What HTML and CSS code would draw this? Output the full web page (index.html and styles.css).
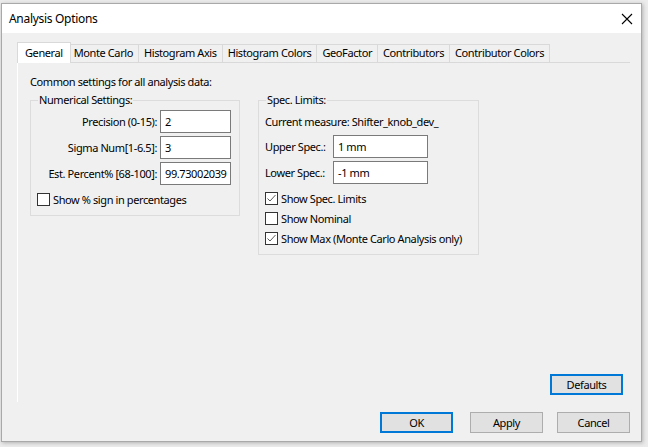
FILE: index.html
```html
<!DOCTYPE html>
<html>
<head>
<meta charset="utf-8">
<link rel="stylesheet" href="styles.css">
</head>
<body>
<div class="window">
  <div class="titlebar">
    <span class="title">Analysis Options</span>
    <svg class="close" width="12" height="12" viewBox="0 0 12 12"><path d="M1 1 L11 11 M11 1 L1 11" stroke="#000" stroke-width="1.1" fill="none"/></svg>
  </div>
  <div class="client">
    <div class="tabs">
      <div class="tab sel">General</div>
      <div class="tab">Monte Carlo</div>
      <div class="tab">Histogram Axis</div>
      <div class="tab">Histogram Colors</div>
      <div class="tab">GeoFactor</div>
      <div class="tab">Contributors</div>
      <div class="tab">Contributor Colors</div>
    </div>
    <div class="panel">
      <div class="intro">Common settings for all analysis data:</div>
      <div class="groups">
        <fieldset class="group num">
          <legend>Numerical Settings:</legend>
          <div class="numgrid">
            <label class="rlabel">Precision (0-15):</label><div class="input">2</div>
            <label class="rlabel">Sigma Num[1-6.5]:</label><div class="input">3</div>
            <label class="rlabel">Est. Percent% [68-100]:</label><div class="input">99.73002039</div>
          </div>
          <div class="check first"><span class="box"></span><span>Show % sign in percentages</span></div>
        </fieldset>
        <fieldset class="group spec">
          <legend>Spec. Limits:</legend>
          <div class="measure">Current measure: Shifter_knob_dev_</div>
          <div class="specgrid">
            <label>Upper Spec.:</label><div class="input">1 mm</div>
            <label>Lower Spec.:</label><div class="input">-1 mm</div>
          </div>
          <div class="check first"><span class="box"><svg width="11" height="11" viewBox="0 0 11 11"><path d="M1.5 5.5 L4 8 L9.5 2" stroke="#5a5a5a" stroke-width="1" fill="none"/></svg></span><span>Show Spec. Limits</span></div>
          <div class="check"><span class="box"></span><span>Show Nominal</span></div>
          <div class="check"><span class="box"><svg width="11" height="11" viewBox="0 0 11 11"><path d="M1.5 5.5 L4 8 L9.5 2" stroke="#5a5a5a" stroke-width="1" fill="none"/></svg></span><span>Show Max (Monte Carlo Analysis only)</span></div>
        </fieldset>
      </div>
      <div class="defaults-row"><div class="btn focus">Defaults</div></div>
    </div>
    <div class="footer">
      <div class="btn focus ok">OK</div>
      <div class="btn apply">Apply</div>
      <div class="btn cancel">Cancel</div>
    </div>
  </div>
</div>
</body>
</html>
```
FILE: styles.css
```css
* { box-sizing: border-box; }
html, body { margin: 0; padding: 0; }
body {
  width: 648px;
  height: 447px;
  overflow: hidden;
  background: #ececec;
  font-family: "Noto Sans", "DejaVu Sans", sans-serif;
  font-size: 11px;
  letter-spacing: -0.4px;
  color: #000;
  padding: 3px 0 0 1px;
}
.window {
  width: 641px;
  height: 439px;
  border: 1px solid #a9a9a9;
  background: #f0f0f0;
  box-shadow: 1px 1px 4px rgba(0,0,0,0.25);
  display: flex;
  flex-direction: column;
}
.titlebar {
  height: 29px;
  background: #fff;
  display: flex;
  align-items: center;
  justify-content: space-between;
  padding: 0 8px 0 7px;
}
.title { font-size: 12px; letter-spacing: -0.3px; }
.client {
  flex: 1;
  display: flex;
  flex-direction: column;
  padding: 9px 0 0 15px;
}
.tabs {
  display: flex;
  align-items: flex-end;
  height: 20px;
  padding-left: 2px;
  position: relative;
  z-index: 1;
}
.tab {
  height: 18px;
  line-height: 16px;
  padding: 0 5px;
  border: 1px solid #d9d9d9;
  border-bottom: none;
  margin-left: -1px;
  background: #f0f0f0;
  white-space: nowrap;
}
.tab:first-child { margin-left: 0; }
.tab.sel {
  height: 21px;
  margin: 0 -2px -1px -2px;
  padding: 2px 7px 0;
  background: #fff;
  position: relative;
  z-index: 2;
}
.panel {
  width: 613px;
  height: 340px;
  border-top: 1px solid #d9d9d9;
  border-left: 1px solid #fff;
  display: flex;
  flex-direction: column;
  padding: 11px 7px 7px 12px;
}
.intro { line-height: 16px; }
.groups {
  display: flex;
  align-items: flex-start;
  gap: 18px;
  margin-top: 2px;
}
fieldset.group {
  margin: 0;
  border: 1px solid #dcdcdc;
  padding: 2px 8px 9px 6px;
  min-width: 0;
}
fieldset.group legend {
  padding: 0 1px;
  margin-left: 1px;
  line-height: 16px;
}
.num { width: 210px; }
.spec { width: 221px; padding-left: 7px; padding-bottom: 5px; }
.numgrid {
  display: grid;
  grid-template-columns: 1fr 71px;
  column-gap: 3px;
  row-gap: 3px;
  align-items: center;
}
.rlabel { text-align: right; white-space: nowrap; }
.input {
  height: 23px;
  background: #fff;
  border: 1px solid #7a7a7a;
  padding: 0 4px;
  line-height: 21px;
  white-space: nowrap;
  overflow: hidden;
}
.check {
  display: flex;
  align-items: center;
  gap: 3px;
  height: 14px;
  margin-top: 6px;
  white-space: nowrap;
}
.check.first { margin-top: 7px; }
.box {
  flex: none;
  width: 13px;
  height: 13px;
  border: 1px solid #333;
  background: #fff;
  display: flex;
  align-items: center;
  justify-content: center;
}
.measure { line-height: 16px; margin-top: 4px; }
.specgrid {
  display: grid;
  grid-template-columns: 66px 95px;
  column-gap: 2px;
  row-gap: 3px;
  align-items: center;
  margin-top: 5px;
}
.defaults-row {
  margin-top: auto;
  display: flex;
  justify-content: flex-end;
}
.btn {
  width: 73px;
  height: 21px;
  background: #e1e1e1;
  border: 1px solid #adadad;
  display: flex;
  align-items: center;
  justify-content: center;
}
.btn.focus { border: 2px solid #0078d7; }
.footer {
  display: flex;
  justify-content: flex-end;
  padding: 10px 11px 0 0;
}
.apply { margin-left: 17px; }
.cancel { margin-left: 14px; }
```
